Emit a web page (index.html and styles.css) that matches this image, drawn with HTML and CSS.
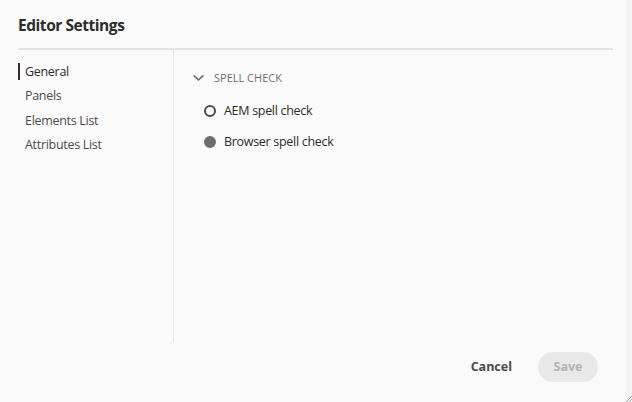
FILE: index.html
```html
<!DOCTYPE html>
<html lang="en">
<head>
<meta charset="utf-8">
<title>Editor Settings</title>
<link rel="stylesheet" href="styles.css">
</head>
<body>
<div class="dialog">
  <header class="header">
    <h1 class="title">Editor Settings</h1>
  </header>
  <div class="main">
    <nav class="nav">
      <a class="nav-item active"><span>General</span></a>
      <a class="nav-item"><span>Panels</span></a>
      <a class="nav-item"><span>Elements List</span></a>
      <a class="nav-item"><span>Attributes List</span></a>
    </nav>
    <section class="content">
      <div class="section-head">
        <svg class="chevron" width="11" height="8" viewBox="0 0 11 8"><path d="M1.2 1.8 L5.5 6 L9.8 1.8" fill="none" stroke="#6e6e6e" stroke-width="1.7" stroke-linecap="round" stroke-linejoin="round"/></svg>
        <span class="section-label">SPELL CHECK</span>
      </div>
      <label class="radio-row">
        <span class="radio"></span>
        <span class="radio-label">AEM spell check</span>
      </label>
      <label class="radio-row">
        <span class="radio checked"></span>
        <span class="radio-label">Browser spell check</span>
      </label>
    </section>
  </div>
  <footer class="footer">
    <button class="btn btn-cancel">Cancel</button>
    <button class="btn btn-save" disabled>Save</button>
  </footer>
  <svg class="resize" width="8" height="8" viewBox="0 0 8 8"><path d="M8 2 L2 8 M8 5 L5 8" stroke="#a8a8a8" stroke-width="1"/></svg>
</div>
</body>
</html>
```

FILE: styles.css
```css
* { box-sizing: border-box; }
html, body {
  margin: 0;
  padding: 0;
  height: 100%;
}
body {
  background: #f3f3f3;
  font-family: "Open Sans", "Noto Sans", sans-serif;
  color: #4b4b4b;
}
.dialog {
  position: relative;
  width: 626px;
  height: 402px;
  background: #fafafa;
  display: flex;
  flex-direction: column;
}
.header {
  margin: 0 13px 0 18px;
  height: 50px;
  border-bottom: 2px solid #e4e4e4;
  padding-top: 14px;
}
.title {
  margin: 0;
  font-size: 15.5px;
  font-weight: 700;
  color: #2c2c2c;
  line-height: 22px;
  letter-spacing: -0.45px;
}
.main {
  display: flex;
  height: 293px;
  margin-left: 18px;
}
.nav {
  width: 156px;
  border-right: 1px solid #e4e4e4;
  padding-top: 9px;
  display: flex;
  flex-direction: column;
}
.nav-item {
  display: block;
  padding: 3.75px 0;
  font-size: 12.5px;
  line-height: 17px;
  letter-spacing: -0.3px;
  color: #4b4b4b;
}
.nav-item span {
  display: inline-block;
  padding-left: 7px;
}
.nav-item.active span {
  border-left: 2px solid #2c2c2c;
  padding-left: 5px;
  color: #2c2c2c;
}
.content {
  flex: 1;
  padding: 19px 0 0 18px;
}
.section-head {
  display: flex;
  align-items: center;
  height: 17px;
  gap: 10px;
  margin-bottom: 9px;
}
.chevron { display: block; margin-left: 1px; }
.section-label {
  font-size: 11px;
  color: #6e6e6e;
}
.radio-row {
  display: flex;
  align-items: center;
  height: 31px;
  padding-left: 12px;
  gap: 8px;
}
.radio {
  width: 12px;
  height: 12px;
  border-radius: 50%;
  border: 2px solid #4b4b4b;
  background: #fafafa;
}
.radio.checked {
  border: 6px solid #6e6e6e;
}
.radio-label {
  font-size: 12.5px;
  letter-spacing: -0.3px;
  color: #2c2c2c;
}
.footer {
  flex: 1;
  display: flex;
  justify-content: flex-end;
  align-items: center;
  padding: 0 28px 12px 0;
  gap: 12px;
}
.btn {
  font-family: inherit;
  font-size: 12.5px;
  font-weight: 700;
  height: 30px;
  border-radius: 15px;
  border: none;
  padding: 0 14px;
}
.btn-cancel {
  background: transparent;
  color: #4b4b4b;
}
.btn-save {
  width: 60px;
  background: #e9e9e9;
  color: #b3b3b3;
}
.resize {
  position: absolute;
  right: -6px;
  bottom: 0;
}
```
